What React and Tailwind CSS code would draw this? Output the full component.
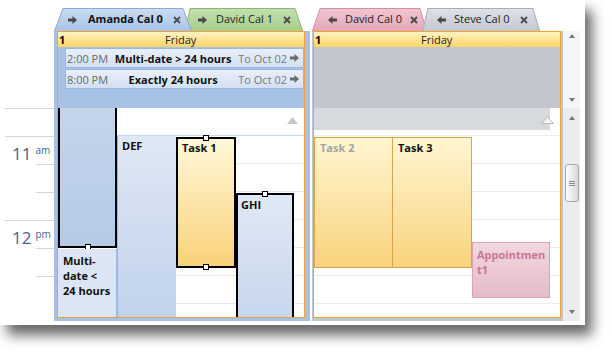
import React from 'react';

const font = "font-['Open_Sans',sans-serif]";

function Arrow({ left, color = '#4a4a4a' }) {
  return (
    <svg width="9" height="8" viewBox="0 0 9 8" className="shrink-0">
      <polygon
        points={left ? '9,2.5 4.5,2.5 4.5,0 0,4 4.5,8 4.5,5.5 9,5.5' : '0,2.5 4.5,2.5 4.5,0 9,4 4.5,8 4.5,5.5 0,5.5'}
        fill={color}
      />
    </svg>
  );
}

function CloseX() {
  return (
    <svg width="8" height="8" viewBox="0 0 8 8" className="shrink-0">
      <path d="M1 1L7 7M7 1L1 7" stroke="#4a4a4a" strokeWidth="1.8" />
    </svg>
  );
}

function Tri({ dir = 'up', color = '#777' }) {
  return (
    <svg width="6" height="4" viewBox="0 0 6 4">
      <polygon points={dir === 'up' ? '0,4 3,0 6,4' : '0,0 6,0 3,4'} fill={color} />
    </svg>
  );
}

// tab with slanted edges, drawn shape behind the label
function Tab({ id, width, sl, sr, from, to, stroke, className, children }) {
  return (
    <div className={`relative h-[23px] shrink-0 flex items-center ${className}`}>
      <svg className="absolute inset-0" width={width} height="23">
        <defs>
          <linearGradient id={id} x1="0" y1="0" x2="0" y2="1">
            <stop offset="0" stopColor={from} />
            <stop offset="1" stopColor={to} />
          </linearGradient>
        </defs>
        <polygon points={`0,23 ${sl},0.5 ${width - sr},0.5 ${width},23`} fill={`url(#${id})`} />
        <polyline points={`0.5,23 ${sl},0.5 ${width - sr},0.5 ${width - 0.5},23`} fill="none" stroke={stroke} />
      </svg>
      <div className="relative flex items-center h-full">{children}</div>
    </div>
  );
}

function Handle({ pos }) {
  return (
    <div
      className={`absolute left-1/2 -translate-x-1/2 w-[6px] h-[6px] bg-white border border-black ${
        pos === 'top' ? '-top-[4px]' : '-bottom-[4px]'
      }`}
    />
  );
}

function AllDayRow({ time, title }) {
  return (
    <div className="h-[20px] border border-[#9db7dc] bg-gradient-to-b from-[#e9eff9] to-[#d3e0f2] flex items-center text-[11px] leading-none">
      <span className="pl-[1px] text-[#6a6a6a]">{time}</span>
      <span className="flex-1 text-center font-bold text-[#111]">{title}</span>
      <span className="text-[#7a7a7a]">To Oct 02</span>
      <span className="ml-[3px] mr-[4px]">
        <Arrow color="#6a6a6a" />
      </span>
    </div>
  );
}

function Header() {
  return (
    <div className="h-[15px] bg-gradient-to-b from-[#fff2c2] to-[#fed463] flex items-center text-[11px] leading-none text-[#222] relative">
      <span className="pl-[1px] font-bold text-black">1</span>
      <span className="flex-1 text-center pr-[8px]">Friday</span>
    </div>
  );
}

function Ruler() {
  const label = (n, s) => (
    <div className="flex items-start pt-[8px] pl-[7px] gap-[4px] text-[#45648f] leading-none">
      <span className="text-[17px]">{n}</span>
      <span className="text-[10px]">{s}</span>
    </div>
  );
  return (
    <div className="w-[54px] shrink-0 flex flex-col">
      <div className="h-[108px] shrink-0" />
      <div className="h-[28px] shrink-0 ml-[5px] border-t border-[#d6d6d6]" />
      <div className="h-[28px] shrink-0 ml-[5px] border-t border-[#d6d6d6]">{label('11', 'am')}</div>
      <div className="h-[28px] shrink-0 ml-[36px] border-t border-[#d6d6d6]" />
      <div className="h-[28px] shrink-0 ml-[36px] border-t border-[#d6d6d6]" />
      <div className="h-[28px] shrink-0 ml-[5px] border-t border-[#d6d6d6]">{label('12', 'pm')}</div>
      <div className="h-[28px] shrink-0 ml-[36px] border-t border-[#d6d6d6]" />
      <div className="h-[17px] shrink-0 ml-[36px] border-t border-[#d6d6d6]" />
    </div>
  );
}

function LeftPanel() {
  return (
    <div className="w-[256px] shrink-0 flex flex-col">
      <div className="h-[31px] flex items-end">
        <Tab id="tabA" width={138} sl={9} sr={9} from="#cbdcf1" to="#a9c3e6" stroke="#8eaad2" className="w-[138px] z-10">
          <div className="pl-[14px] flex items-center">
            <Arrow />
            <span className="ml-[11px] text-[11px] font-bold text-[#111]">Amanda Cal 0</span>
            <span className="ml-[10px]"><CloseX /></span>
          </div>
        </Tab>
        <Tab id="tabB" width={118} sl={5} sr={8} from="#c3e0ae" to="#a6cd8b" stroke="#8fb574" className="w-[118px] -ml-[7px]">
          <div className="pl-[13px] flex items-center">
            <Arrow />
            <span className="ml-[9px] text-[11px] text-[#222]">David Cal 1</span>
            <span className="ml-[10px]"><CloseX /></span>
          </div>
        </Tab>
      </div>
      <div className="h-[290px] bg-[#a6c1e5] pl-[3px] pr-[5px] pb-[3px]">
        <div className="h-full border border-[#f0a234] bg-white flex flex-col">
          <Header />
          <div className="h-[61px] shrink-0 bg-[#a8c2e6] pl-[7px] pt-[1px] flex flex-col gap-[1px]">
            <AllDayRow time="2:00 PM" title="Multi-date > 24 hours" />
            <AllDayRow time="8:00 PM" title="Exactly 24 hours" />
          </div>
          <div className="flex-1 relative overflow-hidden">
            <div className="h-[28px] border-b border-[#c5d6ee]" />
            <div className="h-[28px] border-b border-[#e8e8e8]" />
            <div className="h-[28px] border-b border-[#e8e8e8]" />
            <div className="h-[28px] border-b border-[#e8e8e8]" />
            <div className="h-[28px] border-b border-[#e8e8e8]" />
            <div className="h-[28px] border-b border-[#e8e8e8]" />
            <div className="h-[28px] border-b border-[#e8e8e8]" />
            <div className="h-[28px] border-b border-[#e8e8e8]" />

            <svg className="absolute left-[229px] top-[9px]" width="11" height="7" viewBox="0 0 11 7">
              <polygon points="0,7 5.5,0 11,7" fill="#c6c6c6" />
            </svg>

            {/* selected appointment, runs up from earlier */}
            <div className="absolute left-0 -top-[2px] w-[59px] h-[142px] border-2 border-black bg-gradient-to-b from-[#c4d5eb] to-[#b6cae6]">
              <Handle pos="bottom" />
            </div>
            <div className="absolute left-0 top-[141px] w-[59px] h-[80px] bg-[#dbe5f3] border-r border-[#a0badf] pl-[5px] pt-[4px] text-[11px] font-bold leading-[15px] text-[#111]">
              Multi-
              <br />
              date &lt;
              <br />
              24 hours
            </div>
            <div className="absolute left-[59px] top-[28px] w-[59px] h-[190px] bg-gradient-to-b from-[#dfe8f5] to-[#bfd1ea] border-l border-[#9fb9de] pl-[4px] pt-[4px] text-[11px] font-bold leading-none text-[#111]">
              DEF
            </div>
            <div className="absolute left-[118px] top-[29px] w-[60px] h-[131px] border-2 border-black bg-gradient-to-b from-[#fff8d8] to-[#f9d177] pl-[4px] pt-[3px] text-[11px] font-bold leading-none text-[#111]">
              Task 1
              <Handle pos="top" />
              <Handle pos="bottom" />
            </div>
            <div className="absolute left-[178px] top-[85px] w-[58px] h-[140px] border-2 border-black bg-gradient-to-b from-[#e0e9f5] to-[#c4d5ec] pl-[3px] pt-[4px] text-[11px] font-bold leading-none text-[#111]">
              GHI
              <Handle pos="top" />
            </div>
          </div>
        </div>
      </div>
    </div>
  );
}

function RightPanel() {
  return (
    <div className="w-[251px] shrink-0 ml-[2px] flex flex-col">
      <div className="h-[31px] flex items-end">
        <Tab id="tabC" width={115} sl={8} sr={7} from="#f1c6d1" to="#e3a8b8" stroke="#cf91a3" className="w-[115px]">
          <div className="pl-[16px] flex items-center">
            <Arrow left />
            <span className="ml-[8px] text-[11px] text-[#222]">David Cal 0</span>
            <span className="ml-[8px]"><CloseX /></span>
          </div>
        </Tab>
        <Tab id="tabD" width={118} sl={6} sr={7} from="#dfe2e7" to="#c3c8cf" stroke="#a7adb6" className="w-[118px] -ml-[5px] z-10">
          <div className="pl-[15px] flex items-center">
            <Arrow left />
            <span className="ml-[8px] text-[11px] text-[#222]">Steve Cal 0</span>
            <span className="ml-[10px]"><CloseX /></span>
          </div>
        </Tab>
      </div>
      <div className="h-[290px] bg-[#c1c6cd] pl-[1px] pr-[2px] pb-[3px]">
        <div className="h-full border border-[#f0a234] bg-white flex flex-col">
          <Header />
          <div className="h-[61px] shrink-0 bg-[#c3c7cd]" />
          <div className="flex-1 relative overflow-hidden">
            <div className="h-[28px] border-b border-[#eeeeee]">
              <div className="h-[22px] w-[236px] bg-[#d6d9de]" />
            </div>
            <div className="h-[28px] border-b border-[#ececec]" />
            <div className="h-[28px] border-b border-[#ececec]" />
            <div className="h-[28px] border-b border-[#ececec]" />
            <div className="h-[28px] border-b border-[#ececec]" />
            <div className="h-[28px] border-b border-[#ececec]" />
            <div className="h-[28px] border-b border-[#ececec]" />
            <div className="h-[28px] border-b border-[#ececec]" />

            <svg className="absolute left-[227px] top-[8px]" width="13" height="8" viewBox="0 0 13 8">
              <polygon points="0.5,7.5 6.5,0.8 12.5,7.5" fill="#f4f4f4" stroke="#b9b9b9" />
            </svg>

            <div className="absolute left-0 top-[29px] w-[79px] h-[131px] border border-[#d9a444] bg-gradient-to-b from-[#fff6d2] to-[#f9d37c] pl-[5px] pt-[4px] text-[11px] font-bold leading-none text-[#a3a3a3]">
              Task 2
            </div>
            <div className="absolute left-[78px] top-[29px] w-[80px] h-[131px] border border-[#d9a444] bg-gradient-to-b from-[#fff6d2] to-[#f9d37c] pl-[5px] pt-[4px] text-[11px] font-bold leading-none text-[#111]">
              Task 3
            </div>
            <div className="absolute left-[158px] top-[134px] w-[78px] h-[56px] border border-[#dca2b5] bg-gradient-to-b from-[#f1d8e1] to-[#e4bac9] pl-[4px] pt-[4px] text-[11px] font-bold leading-[15px] text-[#cc7595]">
              Appointmen
              <br />
              t1
            </div>
          </div>
        </div>
      </div>
    </div>
  );
}

function ScrollBar() {
  return (
    <div className="w-[17px] shrink-0 flex flex-col">
      <div className="h-[31px] shrink-0" />
      <div className="h-[77px] shrink-0 bg-[#f6f6f6] flex flex-col items-center justify-between pt-[3px] pb-[6px]">
        <Tri dir="up" />
        <Tri dir="down" />
      </div>
      <div className="h-[213px] shrink-0 bg-[#ececec] flex flex-col items-center pt-[8px] pb-[7px]">
        <Tri dir="up" />
        <div className="mt-[44px] w-[14px] h-[38px] rounded-[3px] border border-[#a9a9a9] bg-gradient-to-r from-[#fdfdfd] to-[#d9d9d9] flex flex-col items-center justify-center gap-[1px]">
          <div className="w-[6px] h-[1px] bg-[#8a8a8a]" />
          <div className="w-[6px] h-[1px] bg-[#8a8a8a]" />
          <div className="w-[6px] h-[1px] bg-[#8a8a8a]" />
        </div>
        <div className="mt-auto">
          <Tri dir="down" />
        </div>
      </div>
    </div>
  );
}

export default function App() {
  return (
    <div className={`w-[612px] h-[354px] bg-white overflow-hidden ${font}`}>
      <div className="w-[585px] h-[325px] bg-white flex shadow-[7px_10px_12px_rgba(0,0,0,0.6)]">
        <Ruler />
        <LeftPanel />
        <RightPanel />
        <ScrollBar />
      </div>
    </div>
  );
}
